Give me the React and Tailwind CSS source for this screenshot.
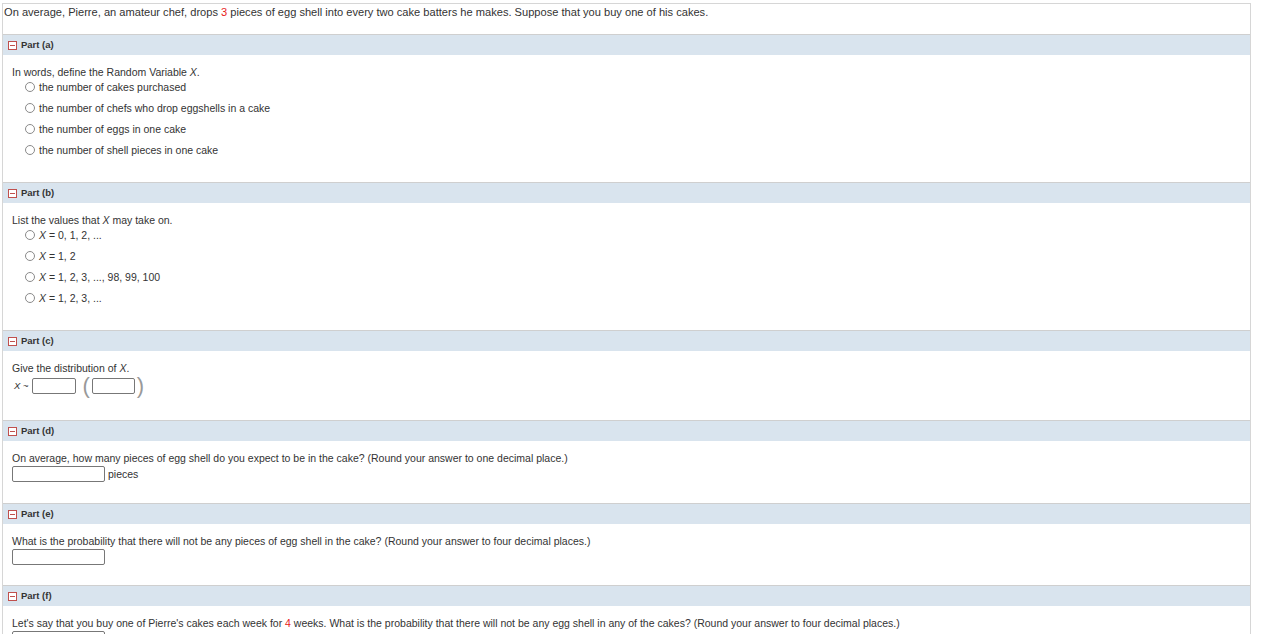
import React from 'react'

const FONT = { fontFamily: '"Liberation Sans", Arial, sans-serif' }

function ToggleIcon() {
  return (
    <span className="inline-flex items-center justify-center w-[9px] h-[9px] border border-[#c0504d] bg-white mr-[4px]">
      <span className="block w-[5px] h-px bg-[#c0504d]" />
    </span>
  )
}

function PartHeader({ label }) {
  return (
    <div className="flex items-center h-[21px] border-t border-[#cfcfcf] bg-[#d9e4ee] pl-[5px] text-[9.5px] font-bold text-[#333]">
      <ToggleIcon />
      <span>Part ({label})</span>
    </div>
  )
}

function Radio({ first, children }) {
  return (
    <div className={`flex items-center h-[14px] pl-[13px] ${first ? 'mt-px' : 'mt-[7px]'}`}>
      <span className="w-[10px] h-[10px] rounded-full border border-[#8a8a8a] bg-white mr-[4px]" />
      <span>{children}</span>
    </div>
  )
}

function X() {
  return <i>X</i>
}

function Box({ w = 'w-[93px]' }) {
  return <span className={`inline-block ${w} h-[16px] border border-[#777] rounded-[2px] bg-white`} />
}

export default function App() {
  return (
    <div className="pt-[3px] pr-[12px] bg-white min-h-screen" style={FONT}>
      <div className="ml-[2px] border-t border-x border-[#d6d6d6] text-[#333]">
        <div className="h-[30px] pl-px pt-px text-[11.1px] leading-[14px]">
          On average, Pierre, an amateur chef, drops <span className="text-[#e8201a]">3</span> pieces of egg shell into every two cake batters he makes. Suppose that you buy one of his cakes.
        </div>

        <PartHeader label="a" />
        <div className="pl-[9px] pt-[10px] pb-[25px] text-[10.5px] leading-[14px]">
          <div>In words, define the Random Variable <X />.</div>
          <Radio first>the number of cakes purchased</Radio>
          <Radio>the number of chefs who drop eggshells in a cake</Radio>
          <Radio>the number of eggs in one cake</Radio>
          <Radio>the number of shell pieces in one cake</Radio>
        </div>

        <PartHeader label="b" />
        <div className="pl-[9px] pt-[10px] pb-[25px] text-[10.5px] leading-[14px]">
          <div>List the values that <X /> may take on.</div>
          <Radio first><X /> = 0, 1, 2, ...</Radio>
          <Radio><X /> = 1, 2</Radio>
          <Radio><X /> = 1, 2, 3, ..., 98, 99, 100</Radio>
          <Radio><X /> = 1, 2, 3, ...</Radio>
        </div>

        <PartHeader label="c" />
        <div className="pl-[9px] pt-[10px] pb-[24px] text-[10.5px] leading-[14px]">
          <div>Give the distribution of <X />.</div>
          <div className="flex items-center h-[20px] mt-px">
            <span className="text-[9.5px] ml-[2px] mr-[3px]"><X /> ~</span>
            <Box w="w-[44px]" />
            <span className="text-[22px] leading-[20px] font-light text-[#999] ml-[7px] mr-[2px]">(</span>
            <Box w="w-[43px]" />
            <span className="text-[22px] leading-[20px] font-light text-[#999] ml-[2px]">)</span>
          </div>
        </div>

        <PartHeader label="d" />
        <div className="pl-[9px] pt-[10px] pb-[21px] text-[10.5px] leading-[14px]">
          <div>On average, how many pieces of egg shell do you expect to be in the cake? (Round your answer to one decimal place.)</div>
          <div className="flex items-center mt-px">
            <Box />
            <span className="ml-[3px]">pieces</span>
          </div>
        </div>

        <PartHeader label="e" />
        <div className="pl-[9px] pt-[10px] pb-[20px] text-[10.5px] leading-[14px]">
          <div>What is the probability that there will not be any pieces of egg shell in the cake? (Round your answer to four decimal places.)</div>
          <div className="flex items-center mt-px">
            <Box />
          </div>
        </div>

        <PartHeader label="f" />
        <div className="pl-[9px] pt-[10px] pb-[21px] text-[10.5px] leading-[14px]">
          <div>Let's say that you buy one of Pierre's cakes each week for <span className="text-[#e8201a]">4</span> weeks. What is the probability that there will not be any egg shell in any of the cakes? (Round your answer to four decimal places.)</div>
          <div className="flex items-center mt-px">
            <Box />
          </div>
        </div>
      </div>
    </div>
  )
}
